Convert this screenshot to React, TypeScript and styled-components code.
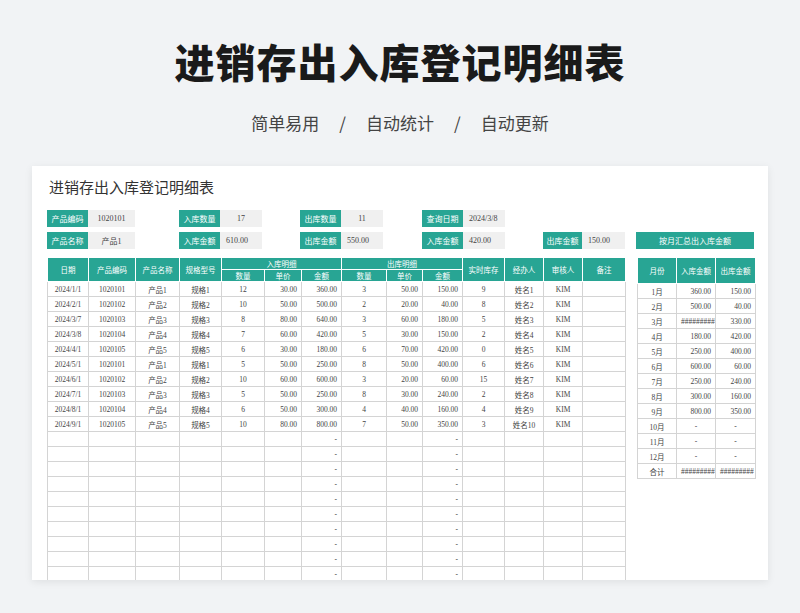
import React from "react";
import styled, { createGlobalStyle } from "styled-components";

const TEAL = "#28a594";

const Global = createGlobalStyle`
  html, body { margin: 0; background: #f1f3f5; }
  body { font-family: "Liberation Serif", "Noto Sans CJK SC", serif; }
`;

const Page = styled.div`
  width: 800px;
  height: 613px;
  overflow: hidden;
  display: flex;
  flex-direction: column;
  align-items: center;
`;

const Title = styled.h1`
  margin: 36px 0 0;
  height: 50px;
  font-family: "Noto Sans CJK SC", sans-serif;
  font-weight: 900;
  font-size: 40px;
  line-height: 50px;
  color: #1a1a1a;
  letter-spacing: 1px;
`;

const Sub = styled.div`
  margin-top: 24px;
  font-family: "Noto Sans CJK SC", sans-serif;
  font-size: 17px;
  color: #444;
  display: flex;
  gap: 20px;
`;

const Card = styled.div`
  margin-top: 31px;
  width: 736px;
  height: 414px;
  background: #fff;
  box-shadow: 0 2px 8px rgba(0, 0, 0, 0.08);
  padding: 10px 14px 0 15px;
  box-sizing: border-box;
  overflow: hidden;
`;

const CardTitle = styled.div`
  font-family: "Noto Sans CJK SC", sans-serif;
  font-size: 15px;
  color: #333;
  height: 22px;
  margin-left: 2px;
`;

const InfoGrid = styled.div`
  margin-top: 12px;
  display: grid;
  grid-template-columns: 132px 121px 122px 121px 93px 118px;
  grid-template-rows: 17px 17px;
  row-gap: 5px;
`;

const Field = styled.div`
  display: flex;
  font-size: 8px;
`;

const Label = styled.div<{ w?: number }>`
  width: ${(p) => p.w ?? 41}px;
  background: ${TEAL};
  color: #fff;
  display: flex;
  align-items: center;
  justify-content: center;
  font-family: "Noto Sans CJK SC", sans-serif;
`;

const Value = styled.div<{ w?: number; center?: boolean }>`
  width: ${(p) => p.w ?? 47}px;
  background: #f0f0f0;
  color: #444;
  display: flex;
  align-items: center;
  justify-content: ${(p) => (p.center ? "center" : "flex-start")};
  padding-left: ${(p) => (p.center ? 0 : 6)}px;
  box-sizing: border-box;
`;

const Button = styled.div`
  grid-column: 6;
  grid-row: 2;
  background: ${TEAL};
  color: #fff;
  font-family: "Noto Sans CJK SC", sans-serif;
  font-size: 8px;
  display: flex;
  align-items: center;
  justify-content: center;
`;

const Tables = styled.div`
  margin-top: 8px;
  display: flex;
  gap: 11px;
  align-items: flex-start;
`;

const Table = styled.table<{ w: number }>`
  width: ${(p) => p.w}px;
  table-layout: fixed;
  border-collapse: collapse;
  font-size: 7.5px;
  color: #444;
`;

const Th = styled.th`
  background: ${TEAL};
  color: #fff;
  font-weight: normal;
  font-family: "Noto Sans CJK SC", sans-serif;
  border: 1px solid #fff;
  height: 11px;
  padding: 0;
`;

const Td = styled.td<{ align?: string }>`
  border: 1px solid #d4d4d4;
  height: 14px;
  padding: 0 4px;
  text-align: ${(p) => p.align ?? "center"};
  white-space: nowrap;
  overflow: hidden;
`;

const mainCols = [41, 47, 44, 42, 43, 37, 40, 45, 36, 40, 42, 39, 39, 43];

const rows = [
  ["2024/1/1", "1020101", "产品1", "规格1", "12", "30.00", "360.00", "3", "50.00", "150.00", "9", "姓名1"],
  ["2024/2/1", "1020102", "产品2", "规格2", "10", "50.00", "500.00", "2", "20.00", "40.00", "8", "姓名2"],
  ["2024/3/7", "1020103", "产品3", "规格3", "8", "80.00", "640.00", "3", "60.00", "180.00", "5", "姓名3"],
  ["2024/3/8", "1020104", "产品4", "规格4", "7", "60.00", "420.00", "5", "30.00", "150.00", "2", "姓名4"],
  ["2024/4/1", "1020105", "产品5", "规格5", "6", "30.00", "180.00", "6", "70.00", "420.00", "0", "姓名5"],
  ["2024/5/1", "1020101", "产品1", "规格1", "5", "50.00", "250.00", "8", "50.00", "400.00", "6", "姓名6"],
  ["2024/6/1", "1020102", "产品2", "规格2", "10", "60.00", "600.00", "3", "20.00", "60.00", "15", "姓名7"],
  ["2024/7/1", "1020103", "产品3", "规格3", "5", "50.00", "250.00", "8", "30.00", "240.00", "2", "姓名8"],
  ["2024/8/1", "1020104", "产品4", "规格4", "6", "50.00", "300.00", "4", "40.00", "160.00", "4", "姓名9"],
  ["2024/9/1", "1020105", "产品5", "规格5", "10", "80.00", "800.00", "7", "50.00", "350.00", "3", "姓名10"],
];

const months = [
  ["1月", "360.00", "150.00"],
  ["2月", "500.00", "40.00"],
  ["3月", "#########", "330.00"],
  ["4月", "180.00", "420.00"],
  ["5月", "250.00", "400.00"],
  ["6月", "600.00", "60.00"],
  ["7月", "250.00", "240.00"],
  ["8月", "300.00", "160.00"],
  ["9月", "800.00", "350.00"],
  ["10月", "-", "-"],
  ["11月", "-", "-"],
  ["12月", "-", "-"],
  ["合计", "#########", "#########"],
];

const rightAligned = new Set([5, 6, 8, 9]);

export default function App() {
  return (
    <Page>
      <Global />
      <Title>进销存出入库登记明细表</Title>
      <Sub>
        <span>简单易用</span>
        <span>/</span>
        <span>自动统计</span>
        <span>/</span>
        <span>自动更新</span>
      </Sub>
      <Card>
        <CardTitle>进销存出入库登记明细表</CardTitle>
        <InfoGrid>
          <Field><Label>产品编码</Label><Value center>1020101</Value></Field>
          <Field><Label>入库数量</Label><Value center w={42}>17</Value></Field>
          <Field><Label>出库数量</Label><Value center w={42}>11</Value></Field>
          <Field><Label>查询日期</Label><Value w={42}>2024/3/8</Value></Field>
          <div />
          <div />
          <Field><Label>产品名称</Label><Value center>产品1</Value></Field>
          <Field><Label>入库金额</Label><Value w={42}>610.00</Value></Field>
          <Field><Label>出库金额</Label><Value w={42}>550.00</Value></Field>
          <Field><Label>入库金额</Label><Value w={42}>420.00</Value></Field>
          <Field><Label w={39}>出库金额</Label><Value w={43}>150.00</Value></Field>
          <Button>按月汇总出入库金额</Button>
        </InfoGrid>
        <Tables>
          <Table w={578}>
            <colgroup>
              {mainCols.map((w, i) => <col key={i} style={{ width: w }} />)}
            </colgroup>
            <thead>
              <tr>
                {["日期", "产品编码", "产品名称", "规格型号"].map((h) => <Th key={h} rowSpan={2}>{h}</Th>)}
                <Th colSpan={3}>入库明细</Th>
                <Th colSpan={3}>出库明细</Th>
                {["实时库存", "经办人", "审核人", "备注"].map((h) => <Th key={h} rowSpan={2}>{h}</Th>)}
              </tr>
              <tr>
                {["数量", "单价", "金额", "数量", "单价", "金额"].map((h, i) => <Th key={i}>{h}</Th>)}
              </tr>
            </thead>
            <tbody>
              {rows.map((r, i) => (
                <tr key={i}>
                  {r.map((c, j) => <Td key={j} align={rightAligned.has(j) ? "right" : "center"}>{c}</Td>)}
                  <Td>KIM</Td>
                  <Td />
                </tr>
              ))}
              {Array.from({ length: 10 }).map((_, i) => (
                <tr key={"e" + i}>
                  {mainCols.map((_, j) => (
                    <Td key={j} align={rightAligned.has(j) ? "right" : "center"}>
                      {j === 6 || j === 9 ? "-" : ""}
                    </Td>
                  ))}
                </tr>
              ))}
            </tbody>
          </Table>
          <Table w={118}>
            <colgroup>
              <col style={{ width: 39 }} />
              <col style={{ width: 39 }} />
              <col style={{ width: 40 }} />
            </colgroup>
            <thead>
              <tr>
                <Th style={{ height: 25 }}>月份</Th>
                <Th>入库金额</Th>
                <Th>出库金额</Th>
              </tr>
            </thead>
            <tbody>
              {months.map((m) => (
                <tr key={m[0]}>
                  <Td>{m[0]}</Td>
                  <Td align={m[1] === "-" ? "center" : "right"}>{m[1]}</Td>
                  <Td align={m[2] === "-" ? "center" : "right"}>{m[2]}</Td>
                </tr>
              ))}
            </tbody>
          </Table>
        </Tables>
      </Card>
    </Page>
  );
}
